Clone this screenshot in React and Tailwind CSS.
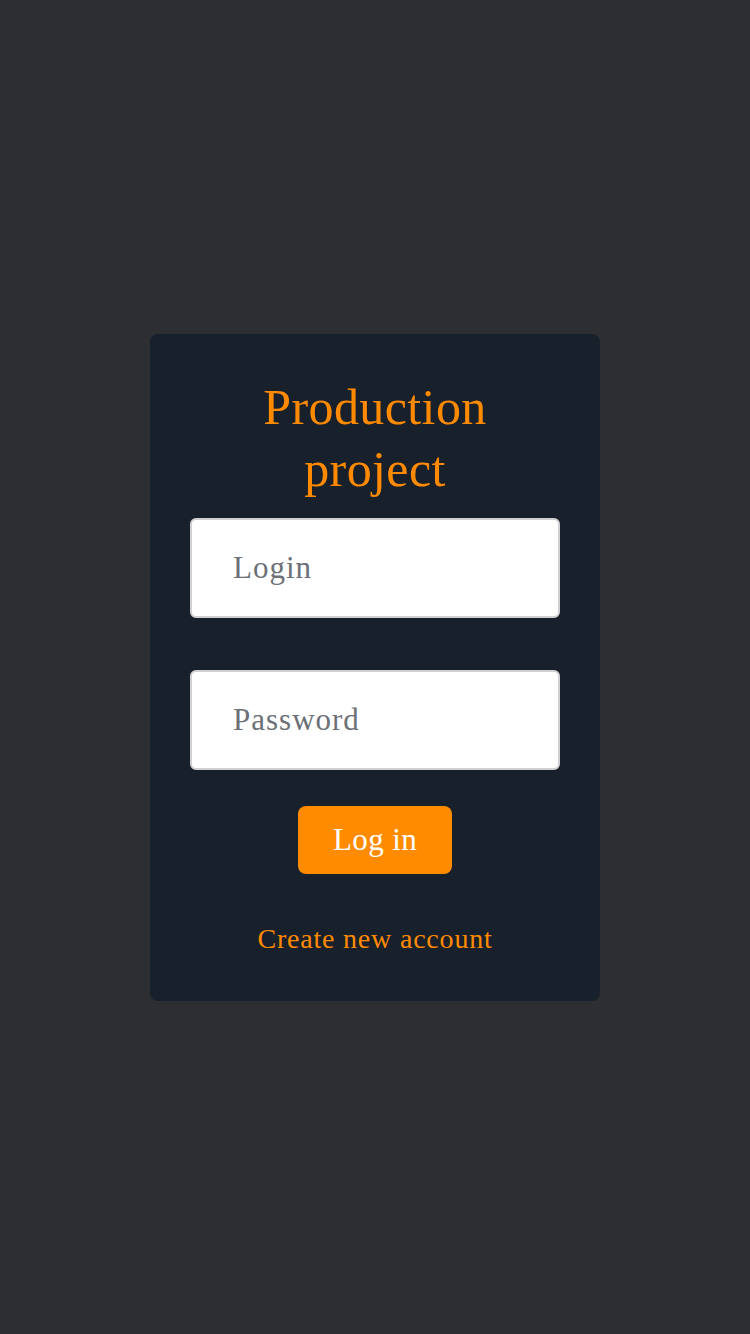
import React, { useState } from 'react';

const serif = { fontFamily: '"Liberation Serif", "DejaVu Serif", serif' };

export default function App() {
    const [login, setLogin] = useState('');
    const [password, setPassword] = useState('');

    return (
        <div className="min-h-screen w-full bg-[#2d2e32] flex items-center justify-center" style={serif}>
            <div className="w-[450px] h-[667px] bg-[#18202b] rounded-lg flex flex-col items-center pt-[42px]">
                {/* Title */}
                <h1 className="text-[#ff8a00] text-[50px] leading-[62px] tracking-[0.4px] text-center w-[260px]">
                    Production project
                </h1>

                {/* Inputs */}
                <input
                    type="text"
                    value={login}
                    onChange={e => setLogin(e.target.value)}
                    placeholder="Login"
                    className="mt-[18px] w-[370px] h-[100px] bg-white border-2 border-[#cfd0d2] rounded-md pl-[41px] text-[31px] tracking-[1px] text-[#333] placeholder:text-[#6c7077] outline-none"
                />
                <input
                    type="password"
                    value={password}
                    onChange={e => setPassword(e.target.value)}
                    placeholder="Password"
                    className="mt-[52px] w-[370px] h-[100px] bg-white border-2 border-[#cfd0d2] rounded-md pl-[41px] text-[31px] tracking-[1px] text-[#333] placeholder:text-[#6c7077] outline-none"
                />

                {/* Submit */}
                <button
                    type="button"
                    className="mt-[36px] w-[154px] h-[68px] bg-[#ff8c00] rounded-lg text-white text-[31px] tracking-[0.4px] leading-none"
                >
                    Log in
                </button>

                {/* Register link */}
                <a href="#" className="mt-[50px] text-[#ff8a00] text-[28px] tracking-[0.8px] leading-[30px]">
                    Create new account
                </a>
            </div>
        </div>
    );
}
